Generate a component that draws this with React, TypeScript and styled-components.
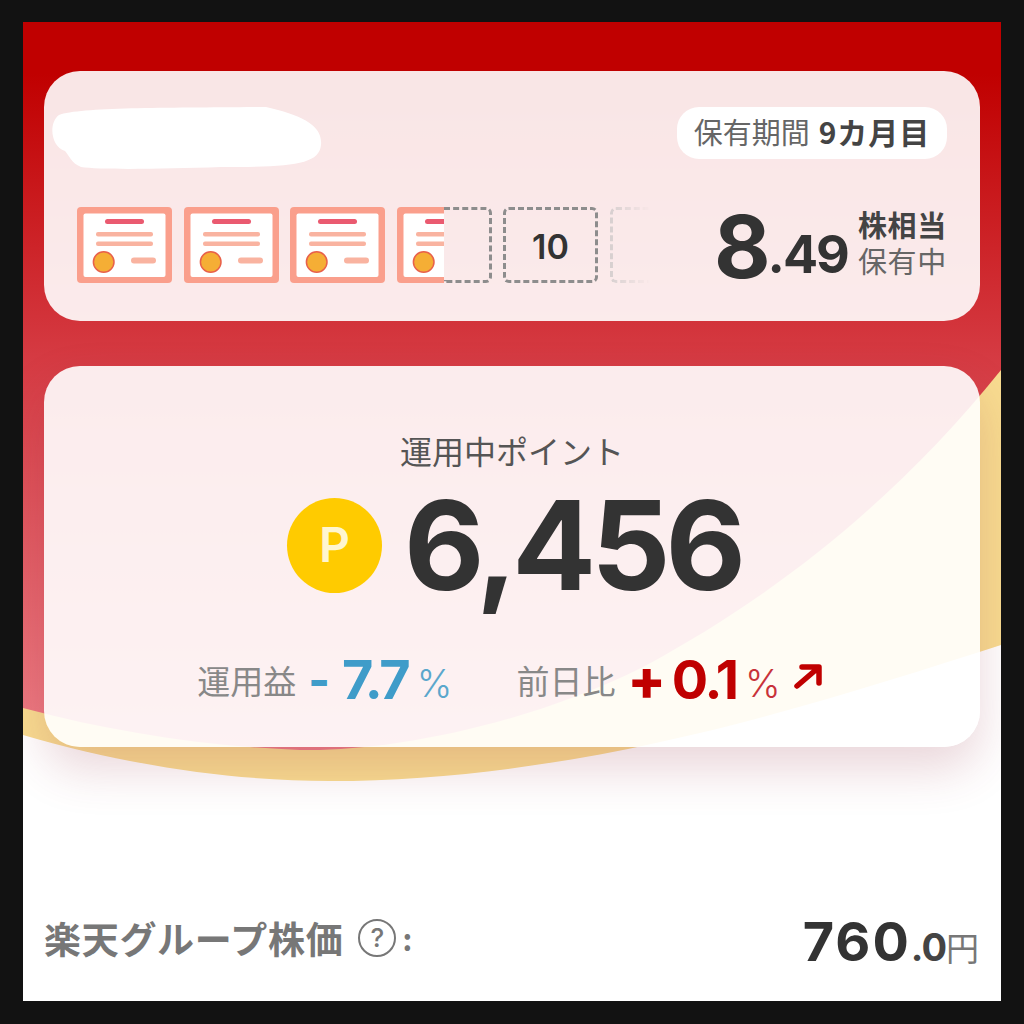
import React from "react";
import styled, { createGlobalStyle } from "styled-components";

const Global = createGlobalStyle`
  html, body { margin: 0; padding: 0; background: #111; }
  * { box-sizing: border-box; }
`;
const JP = `"Noto Sans CJK JP", "Noto Sans", sans-serif`;
const NUM = `Inter, "Noto Sans CJK JP", sans-serif`;

const Frame = styled.div`
  width: 1024px; height: 1024px; background: #121212;
  padding: 22px 23px 23px 23px;
`;
const Screen = styled.div`
  position: relative; width: 978px; height: 979px; overflow: hidden;
  background: #fff; display: flex; flex-direction: column;
  padding: 49px 21px 0;
`;
const Backdrop = styled.svg`
  position: absolute; left: 0; top: 0; width: 978px; height: 979px;
`;
const HoldingCard = styled.section`
  position: relative; flex: none; height: 250px; border-radius: 36px;
  background: rgba(255,255,255,.9);
  display: flex; flex-direction: column; padding: 36px 33px 0 33px;
`;
const HeaderRow = styled.div`
  display: flex; justify-content: space-between; height: 62px;
  margin-left: -26px;
`;
const Redaction = styled.svg`width: 272px; height: 63px; flex: none;`;
const Pill = styled.div`
  width: 270px; height: 52px; border-radius: 22px; background: #fff;
  display: flex; align-items: center; justify-content: center; gap: 9px;
  padding-bottom: 4px;
  font: 400 29px/1 ${JP}; color: #666;
`;
const PillStrong = styled.strong`font: 700 30px/1 ${JP}; letter-spacing: 1px; color: #444;`;
const CertRow = styled.div`
  display: flex; align-items: flex-start; margin-top: 38px;
`;
const Slots = styled.div`
  display: flex; gap: 11.5px; width: 574px; flex: none;
`;
const Cert = styled.svg`width: 95px; height: 76px; flex: none; display: block;`;
const SplitSlot = styled.div`display: flex; width: 95px; height: 76px; flex: none;`;
const ClippedCert = styled.div`width: 47px; height: 76px; overflow: hidden; flex: none;`;
const DashedEnd = styled.div`
  width: 48px; height: 76px; flex: none;
  border: 3px dashed #8d8d8d; border-left: 0; border-radius: 0 6px 6px 0;
`;
const DashedSlot = styled.div`
  width: 95px; height: 76px; flex: none; border: 3px dashed #8d8d8d; border-radius: 6px;
  display: flex; align-items: center; justify-content: center; padding-top: 3px;
  font: 600 34px/1 ${NUM}; color: #333;
`;
const FadedSlot = styled.div`
  width: 41px; height: 76px; flex: none;
  border: 3px dashed #bbb; border-right: 0; border-radius: 6px 0 0 6px;
  opacity: .55;
  -webkit-mask-image: linear-gradient(90deg, #000, transparent);
  mask-image: linear-gradient(90deg, #000, transparent);
`;
const Shares = styled.div`
  display: flex; align-items: flex-end; margin-left: auto; height: 76px;
`;
const ShareBig = styled.span`
  font: 700 87px/82px ${NUM}; letter-spacing: -3px; color: #333; margin-bottom: -5px;
`;
const ShareSmall = styled.span`
  font: 700 52px/70px ${NUM}; letter-spacing: -2px; color: #333; margin-bottom: -7px;
`;
const ShareUnit = styled.div`
  display: flex; flex-direction: column; margin-left: 10px; margin-bottom: 5px;
`;
const UnitStrong = styled.span`font: 700 29px/36px ${JP}; letter-spacing: .7px; color: #444;`;
const UnitLight = styled.span`font: 400 29px/36px ${JP}; letter-spacing: .7px; color: #666;`;
const PointCard = styled.section`
  position: relative; flex: none; height: 381px; margin-top: 45px; border-radius: 36px;
  background: rgba(255,255,255,.9);
  box-shadow: 0 22px 48px rgba(150,50,70,.2);
  display: flex; flex-direction: column; align-items: center; padding-top: 62px;
`;
const PointLabel = styled.div`
  font: 400 32px/44px ${JP}; color: #555; height: 44px;
`;
const PointRow = styled.div`
  display: flex; align-items: center; gap: 22px; margin-top: 8px; height: 130px; margin-left: 4px;
`;
const Coin = styled.div`
  width: 95px; height: 95px; border-radius: 50%; background: #ffcb00; flex: none;
  display: flex; align-items: center; justify-content: center;
  font: 600 48px/1 ${NUM}; color: #fff6d0;
`;
const PointValue = styled.div`
  font: 700 124px/130px ${NUM}; letter-spacing: -5px; color: #333;
`;
const StatRow = styled.div`
  display: flex; align-items: center; margin-top: 40px; height: 60px;
`;
const StatLabel = styled.span`font: 400 33px/60px ${JP}; color: #888; margin-right: 12px;`;
const StatValue = styled.span<{ $color: string }>`
  font: 700 54px/60px ${NUM}; letter-spacing: -2px; color: ${p => p.$color};
`;
const StatSign = styled.span<{ $color: string; $size: number; $gap: number }>`
  font: 800 ${p => p.$size}px/60px ${NUM}; color: ${p => p.$color}; margin-right: ${p => p.$gap}px;
`;
const StatPct = styled.span<{ $color: string }>`
  font: 300 38px/60px ${NUM}; color: ${p => p.$color}; margin-left: 8px; margin-top: 6px;
`;
const StatGroup = styled.div<{ $gap?: number }>`
  display: flex; align-items: center; margin-left: ${p => p.$gap ?? 0}px;
`;
const Arrow = styled.svg`width: 30px; height: 26px; margin: -8px 4px 0 12px;`;
const PriceRow = styled.footer`
  position: relative; display: flex; align-items: center; margin-top: 161px; height: 60px;
`;
const PriceLabel = styled.span`font: 700 37px/60px ${JP}; letter-spacing: .7px; color: #777;`;
const HelpMark = styled.span`
  width: 38px; height: 38px; margin-left: 15px; border: 2.5px solid #777; border-radius: 50%;
  display: flex; align-items: center; justify-content: center;
  font: 500 26px/1 ${NUM}; color: #777;
`;
const Colon = styled.span`font: 700 30px/60px ${JP}; color: #777; margin-left: 6px;`;
const Price = styled.div`
  margin: 12px 1px 0 auto; display: flex; align-items: baseline;
`;
const PriceBig = styled.span`font: 700 54px/60px ${NUM}; letter-spacing: 2px; color: #333;`;
const PriceDec = styled.span`font: 700 38px/60px ${NUM}; letter-spacing: -1px; color: #444;`;
const PriceYen = styled.span`font: 400 33px/60px ${JP}; color: #777;`;

const Certificate = () => (
  <Cert viewBox="0 0 95 76">
    <rect width="95" height="76" rx="4" fill="#fa9f8c" />
    <rect x="6.5" y="6.5" width="82" height="63.5" rx="2" fill="#fff" />
    <rect x="28" y="12" width="39" height="5" rx="2.5" fill="#ea5a70" />
    <rect x="19" y="25" width="57" height="4.5" rx="2" fill="#f9b3a0" />
    <rect x="19" y="34.5" width="57" height="4.5" rx="2" fill="#f9b3a0" />
    <rect x="54" y="50.5" width="25" height="6" rx="3" fill="#f9b3a0" />
    <circle cx="26.7" cy="55" r="10.3" fill="#f5ae35" stroke="#e8604a" strokeWidth="1.5" />
  </Cert>
);

export default function App() {
  return (
    <Frame>
      <Global />
      <Screen>
        <Backdrop viewBox="0 0 978 979">
          <defs>
            <linearGradient id="red" gradientUnits="userSpaceOnUse" x1="0" y1="0" x2="0" y2="740">
              <stop offset="0" stopColor="#c00000" />
              <stop offset=".07" stopColor="#c00000" />
              <stop offset=".45" stopColor="#d53a42" />
              <stop offset="1" stopColor="#ee8088" />
            </linearGradient>
          </defs>
          <path d="M0 0 H978 V623 C800 680 560 759 307 759 C215 759 110 745 0 713Z" fill="#f8dc90" />
          <path d="M0 0 H978 V348 C880 470 760 570 620 645 C500 705 360 730 277 728 C180 724 90 710 0 686Z" fill="url(#red)" />
        </Backdrop>
        <HoldingCard>
          <HeaderRow>
            <Redaction viewBox="0 0 272 63">
              <path d="M8 8 C30 0 120 1 215 0 C250 8 272 18 270 38 C268 58 240 60 170 60 C110 62 50 63 30 60 C20 56 18 48 14 44 C0 40 -3 16 8 8Z" fill="#fff" />
            </Redaction>
            <Pill>保有期間<PillStrong>9カ月目</PillStrong></Pill>
          </HeaderRow>
          <CertRow>
            <Slots>
              <Certificate />
              <Certificate />
              <Certificate />
              <SplitSlot>
                <ClippedCert><Certificate /></ClippedCert>
                <DashedEnd />
              </SplitSlot>
              <DashedSlot>10</DashedSlot>
              <FadedSlot />
            </Slots>
            <Shares>
              <ShareBig>8</ShareBig>
              <ShareSmall>.49</ShareSmall>
              <ShareUnit>
                <UnitStrong>株相当</UnitStrong>
                <UnitLight>保有中</UnitLight>
              </ShareUnit>
            </Shares>
          </CertRow>
        </HoldingCard>
        <PointCard>
          <PointLabel>運用中ポイント</PointLabel>
          <PointRow>
            <Coin>P</Coin>
            <PointValue>6,456</PointValue>
          </PointRow>
          <StatRow>
            <StatGroup>
              <StatLabel>運用益</StatLabel>
              <StatSign $color="#3f9cc9" $size={46} $gap={12}>-</StatSign>
              <StatValue $color="#3f9cc9">7.7</StatValue>
              <StatPct $color="#5ba7cc">%</StatPct>
            </StatGroup>
            <StatGroup $gap={64}>
              <StatLabel>前日比</StatLabel>
              <StatSign $color="#c00000" $size={56} $gap={6}>+</StatSign>
              <StatValue $color="#c00000">0.1</StatValue>
              <StatPct $color="#c8323a">%</StatPct>
              <Arrow viewBox="0 0 30 26">
                <path d="M4 23 L25 5 M9 4 H26 V20" fill="none" stroke="#c00000" strokeWidth="5.5" strokeLinecap="round" strokeLinejoin="round" />
              </Arrow>
            </StatGroup>
          </StatRow>
        </PointCard>
        <PriceRow>
          <PriceLabel>楽天グループ株価</PriceLabel>
          <HelpMark>?</HelpMark>
          <Colon>:</Colon>
          <Price>
            <PriceBig>760</PriceBig>
            <PriceDec>.0</PriceDec>
            <PriceYen>円</PriceYen>
          </Price>
        </PriceRow>
      </Screen>
    </Frame>
  );
}
